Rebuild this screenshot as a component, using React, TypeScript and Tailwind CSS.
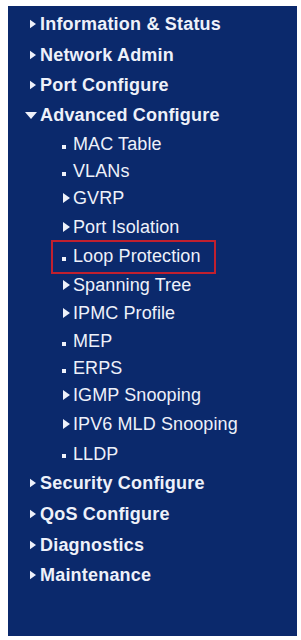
import { FC } from 'react';

type Kind = 'closed' | 'open' | 'leaf';

interface MenuItem {
  label: string;
  level: 0 | 1;
  kind: Kind;
  h: string;
  marked?: boolean;
}

const items: MenuItem[] = [
  { label: 'Information & Status', level: 0, kind: 'closed', h: 'h-[30px]' },
  { label: 'Network Admin', level: 0, kind: 'closed', h: 'h-[31px]' },
  { label: 'Port Configure', level: 0, kind: 'closed', h: 'h-[30px]' },
  { label: 'Advanced Configure', level: 0, kind: 'open', h: 'h-[30px]' },
  { label: 'MAC Table', level: 1, kind: 'leaf', h: 'h-[28px]' },
  { label: 'VLANs', level: 1, kind: 'leaf', h: 'h-[26px]' },
  { label: 'GVRP', level: 1, kind: 'closed', h: 'h-[28px]' },
  { label: 'Port Isolation', level: 1, kind: 'closed', h: 'h-[30px]' },
  { label: 'Loop Protection', level: 1, kind: 'leaf', h: 'h-[28px]', marked: true },
  { label: 'Spanning Tree', level: 1, kind: 'closed', h: 'h-[29px]' },
  { label: 'IPMC Profile', level: 1, kind: 'closed', h: 'h-[28px]' },
  { label: 'MEP', level: 1, kind: 'leaf', h: 'h-[28px]' },
  { label: 'ERPS', level: 1, kind: 'leaf', h: 'h-[26px]' },
  { label: 'IGMP Snooping', level: 1, kind: 'closed', h: 'h-[28px]' },
  { label: 'IPV6 MLD Snooping', level: 1, kind: 'closed', h: 'h-[30px]' },
  { label: 'LLDP', level: 1, kind: 'leaf', h: 'h-[29px]' },
  { label: 'Security Configure', level: 0, kind: 'closed', h: 'h-[30px]' },
  { label: 'QoS Configure', level: 0, kind: 'closed', h: 'h-[31px]' },
  { label: 'Diagnostics', level: 0, kind: 'closed', h: 'h-[31px]' },
  { label: 'Maintenance', level: 0, kind: 'closed', h: 'h-[30px]' },
];

const RightArrow: FC<{ className?: string }> = ({ className }) => (
  <svg width="7" height="10" viewBox="0 0 7 10" className={className}>
    <path d="M0 0 L7 5 L0 10 Z" fill="#eef1fa" />
  </svg>
);

const DownArrow: FC = () => (
  <svg width="12" height="7" viewBox="0 0 12 7">
    <path d="M0 0 L12 0 L6 7 Z" fill="#eef1fa" />
  </svg>
);

const Row: FC<{ item: MenuItem }> = ({ item }) => {
  const top = item.level === 0;

  return (
    <div className={`relative flex items-center ${item.h} ${top ? 'pl-[17px]' : 'pl-[54px]'}`}>
      {/* marker column */}
      {top ? (
        <div className="w-[15px] flex items-center">
          {item.kind === 'open' ? <DownArrow /> : <RightArrow className="ml-[5px] w-[6px]" />}
        </div>
      ) : (
        <div className="w-[11px] flex items-center">
          {item.kind === 'closed' ? (
            <RightArrow className="ml-[1px]" />
          ) : (
            <span className="block w-[4px] h-[4px] mt-[5px] bg-[#eef1fa]" />
          )}
        </div>
      )}

      <span
        className={`text-[#eef1fa] text-[18px] leading-none whitespace-nowrap ${
          top ? 'font-bold tracking-[0.2px]' : 'font-normal tracking-[0.1px]'
        }`}
      >
        {item.label}
      </span>

      {/* 선택 표시 박스 */}
      {item.marked && (
        <div className="absolute left-[43px] top-[-2px] w-[165px] h-[34px] border-2 border-[#c0202e] pointer-events-none" />
      )}
    </div>
  );
};

export default function App() {
  return (
    <div className="w-[301px] h-[640px] bg-white pt-[6px] pl-[8px] font-['Liberation_Sans',Arial,sans-serif]">
      <div className="w-[289px] h-[630px] bg-[#0b296c] pt-[3px]">
        {items.map((item) => (
          <Row key={item.label} item={item} />
        ))}
      </div>
    </div>
  );
}
